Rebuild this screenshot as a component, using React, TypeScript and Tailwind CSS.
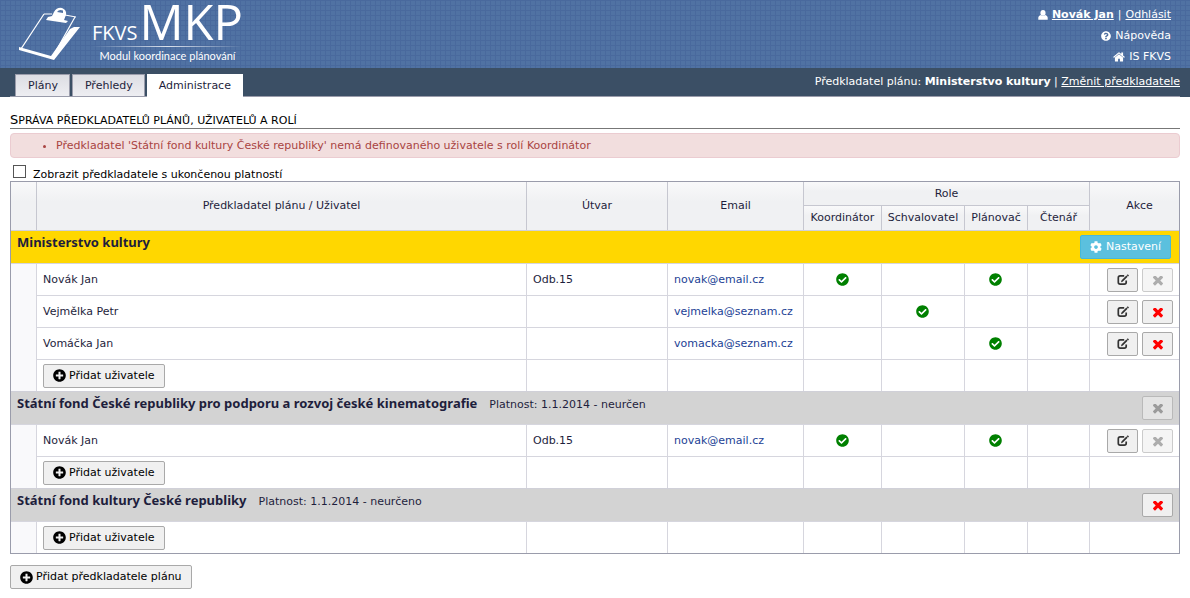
import type { ReactNode } from 'react'
import { FaCheckCircle, FaCog, FaPlusCircle, FaQuestionCircle } from 'react-icons/fa'

interface User {
  name: string
  unit: string
  email: string
  /** Koordinátor, Schvalovatel, Plánovač, Čtenář */
  roles: boolean[]
  locked?: boolean
}

interface Group {
  name: string
  validity?: string
  own?: boolean
  locked?: boolean
  users: User[]
}

const ROLES = ['Koordinátor', 'Schvalovatel', 'Plánovač', 'Čtenář']

const GROUPS: Group[] = [
  {
    name: 'Ministerstvo kultury',
    own: true,
    users: [
      { name: 'Novák Jan', unit: 'Odb.15', email: 'novak@email.cz', roles: [true, false, true, false], locked: true },
      { name: 'Vejmělka Petr', unit: '', email: 'vejmelka@seznam.cz', roles: [false, true, false, false] },
      { name: 'Vomáčka Jan', unit: '', email: 'vomacka@seznam.cz', roles: [false, false, true, false] },
    ],
  },
  {
    name: 'Státní fond České republiky pro podporu a rozvoj české kinematografie',
    validity: 'Platnost: 1.1.2014 - neurčen',
    locked: true,
    users: [
      { name: 'Novák Jan', unit: 'Odb.15', email: 'novak@email.cz', roles: [true, false, true, false], locked: true },
    ],
  },
  {
    name: 'Státní fond kultury České republiky',
    validity: 'Platnost: 1.1.2014 - neurčeno',
    users: [],
  },
]

const TH = 'p-0 font-normal border-[#c6c7d0] bg-linear-to-b from-[#f9f9fa] to-[#f0f1f3] to-40%'
const TD = 'border-t border-l border-[#d6d6de] px-1.5 py-0'

function UserIcon() {
  return (
    <svg viewBox="0 0 10 10" className="size-2.5" fill="currentColor" aria-hidden="true">
      <ellipse cx="5" cy="2.9" rx="2.6" ry="2.9" />
      <path d="M0.3 9.8 V7.4 Q0.5 5.6 2.6 5 Q5 7 7.4 5 Q9.5 5.6 9.7 7.4 V9.8 Z" />
    </svg>
  )
}

function HomeIcon() {
  return (
    <svg viewBox="50 200 1692 1400" className="h-2.5 w-3" fill="currentColor" aria-hidden="true">
      <path d="M1472 992v480q0 26-19 45t-45 19h-384v-384h-256v384h-384q-26 0-45-19t-19-45v-480q0-1 .5-3t.5-3l575-474 575 474q1 2 1 6zm223-69l-62 74q-8 9-21 11h-3q-13 0-21-7l-692-577-692 577q-12 8-24 7-13-2-21-11l-62-74q-8-10-7-23.5t11-21.5l719-599q32-26 76-26t76 26l244 204v-195q0-14 9-23t23-9h192q14 0 23 9t9 23v408l219 182q10 8 11 21.5t-7 23.5z" />
    </svg>
  )
}

function EditIcon() {
  return (
    <svg viewBox="0 0 12 12" className="size-3" fill="none" stroke="#333" aria-hidden="true">
      <path d="M7.2 1.8 H3.2 Q1.3 1.8 1.3 3.7 V8.3 Q1.3 10.2 3.2 10.2 H7.3 Q9.2 10.2 9.2 8.3 V6.6" strokeWidth="1.7" />
      <path d="M5 7.2 L10 2.2" strokeWidth="1.8" />
      <path d="M10.4 1.8 L11.4 0.8" strokeWidth="1.8" />
      <path d="M4 8.2 L4.5 6.4 L5.8 7.7 Z" fill="#333" stroke="none" />
    </svg>
  )
}

function CrossIcon() {
  return (
    <svg viewBox="302 434 1188 1188" className="mt-0.5 size-2.5" fill="currentColor" aria-hidden="true">
      <path d="M1490 1322q0 40-28 68l-136 136q-28 28-68 28t-68-28l-294-294-294 294q-28 28-68 28t-68-28l-136-136q-28-28-28-68t28-68l294-294-294-294q-28-28-28-68t28-68l136-136q28-28 68-28t68 28l294 294 294-294q28-28 68-28t68 28l136 136q28 28 28 68t-28 68l-294 294 294 294q28 28 28 68z" />
    </svg>
  )
}

function Logo() {
  return (
    <div className="flex pl-[18px]">
      <svg viewBox="0 0 70 60" className="mt-1 h-15 w-[70px]" aria-hidden="true">
        <path d="M26 10 L3 45 L34 54 L57 13" fill="none" stroke="#fff" strokeWidth="1.2" />
        <path d="M26 10 L34 10 M47 11 L58 13" stroke="#fff" strokeWidth="1.2" />
        <path d="M1 43 L33 52 L52 25 L56 23 L62 23 L36 56 L1 46 Z" fill="#fff" />
        <path d="M34 12 L36 8 Q39 3 44 4 Q49 6 48 11 L46 16 L50 17 L48 19 L28 16 L30 13 Z" fill="#fff" />
        <path d="M39 8 Q41 5 45 6.5 L45 9 Z" fill="#5072a3" />
      </svg>
      <div className="flex flex-col items-center pl-1 font-['Open_Sans','Noto_Sans',sans-serif] text-white">
        <div className="flex h-[46px] items-baseline gap-0.5">
          <span className="text-[20px] leading-[42px]">FKVS</span>
          <span className="text-[49px] leading-[42px]">MKP</span>
        </div>
        <div className="h-px w-full bg-linear-to-r from-transparent via-white/80 to-transparent" />
        <div className="font-[Lato,sans-serif] text-[11px] leading-[18px]">Modul koordinace plánování</div>
      </div>
    </div>
  )
}

function Header() {
  return (
    <header className="flex h-17 justify-between bg-[#5072a3] bg-[linear-gradient(#49699d_1px,transparent_1px),linear-gradient(90deg,#49699d_1px,transparent_1px)] bg-size-[5px_5px]">
      <Logo />
      <div className="flex flex-col items-end gap-1 pt-1.5 pr-[19px] leading-[17px] text-white">
        <div className="flex items-center gap-1">
          <UserIcon />
          <a href="#profil" className="font-bold underline">Novák Jan</a>
          <span>|</span>
          <a href="#odhlasit" className="underline">Odhlásit</a>
        </div>
        <a href="#napoveda" className="flex items-center gap-1">
          <FaQuestionCircle className="size-2.5" />
          Nápověda
        </a>
        <a href="#fkvs" className="flex items-center gap-1">
          <HomeIcon />
          IS FKVS
        </a>
      </div>
    </header>
  )
}

function Tab({ active, children }: { active?: boolean; children: ReactNode }) {
  return (
    <a
      href="#tab"
      aria-current={active ? 'page' : undefined}
      className={
        active
          ? '-mb-px h-[23px] bg-white px-3 leading-6'
          : 'h-[22px] border border-b-0 border-[#9a9cab] bg-linear-to-b from-[#dcdde3] to-[#eeeef2] pr-[11px] pl-3 leading-[22px]'
      }
    >
      {children}
    </a>
  )
}

function TabBar() {
  return (
    <nav className="bg-[#3b4f65] px-2.5">
      <div className="flex h-[29px] items-end justify-between border-b border-[#9a9cab] pl-[5px]">
        <div className="flex items-end gap-0.5">
          <Tab>Plány</Tab>
          <Tab>Přehledy</Tab>
          <Tab active>Administrace</Tab>
        </div>
        <p className="self-start leading-7 text-white">
          Předkladatel plánu: <b>Ministerstvo kultury</b> | <a href="#zmenit" className="underline">Změnit předkladatele</a>
        </p>
      </div>
    </nav>
  )
}

function AddButton({ children }: { children: ReactNode }) {
  return (
    <button className="flex h-6 items-center gap-[3px] rounded-xs border border-[#a9a9a9] bg-[#f0f0f0] px-[9px] text-black">
      <FaPlusCircle className="size-[13px]" />
      {children}
    </button>
  )
}

function EditButton() {
  return (
    <button aria-label="Upravit" className="flex h-6 w-[31px] items-center justify-center rounded-xs border border-[#a9a9a9] bg-[#f0f0f0]">
      <EditIcon />
    </button>
  )
}

function DeleteButton({ disabled }: { disabled?: boolean }) {
  return (
    <button
      aria-label="Odstranit"
      disabled={disabled}
      className="flex h-6 w-[31px] items-center justify-center rounded-xs border border-[#a9a9a9] bg-[#f0f0f0] text-[#f00] disabled:text-[#777] disabled:opacity-60"
    >
      <CrossIcon />
    </button>
  )
}

function UserRow({ user, first }: { user: User; first: boolean }) {
  return (
    <tr className="h-8">
      <td className={first ? 'border-t border-[#d6d6de] bg-[#f9f9fb] p-0' : 'bg-[#f9f9fb] p-0'} />
      <td className={TD}>{user.name}</td>
      <td className={TD}>{user.unit}</td>
      <td className={TD}>
        <a href={`mailto:${user.email}`} className="text-[#1c3f95]">{user.email}</a>
      </td>
      {user.roles.map((has, i) => (
        <td key={ROLES[i]} className={TD}>
          {has && <FaCheckCircle className="mx-auto size-[13px] text-[#008000]" aria-label="Ano" />}
        </td>
      ))}
      <td className={TD}>
        <div className="flex justify-end gap-1">
          <EditButton />
          <DeleteButton disabled={user.locked} />
        </div>
      </td>
    </tr>
  )
}

function GroupRows({ group }: { group: Group }) {
  return (
    <tbody>
      <tr className={group.own ? 'h-[33px] bg-[#ffd700]' : 'h-[33px] bg-[#d3d3d3]'}>
        <td colSpan={9} className="border-t border-[#d0d0d8] px-1.5 py-0">
          <div className="flex items-center justify-between">
            <div className="flex items-baseline gap-3 self-start leading-4">
              <b className="font-['Noto_Sans',sans-serif] text-[13px] leading-[15px]">{group.name}</b>
              {group.validity && <span>{group.validity}</span>}
            </div>
            {group.own ? (
              <button className="mr-0.5 flex h-6 items-center gap-1 rounded-xs border border-[#46b8da] bg-[#5bc0de] px-[9px] text-white">
                <FaCog className="size-3" />
                Nastavení
              </button>
            ) : (
              <DeleteButton disabled={group.locked} />
            )}
          </div>
        </td>
      </tr>
      {group.users.map((user, i) => (
        <UserRow key={user.name} user={user} first={i === 0} />
      ))}
      <tr className="h-8">
        <td className={group.users.length === 0 ? 'border-t border-[#d6d6de] bg-[#f9f9fb] p-0' : 'bg-[#f9f9fb] p-0'} />
        <td className={TD}>
          <AddButton>Přidat uživatele</AddButton>
        </td>
        {[0, 1, 2, 3, 4, 5, 6].map((i) => (
          <td key={i} className={TD} />
        ))}
      </tr>
    </tbody>
  )
}

function UserTable() {
  return (
    <table className="w-full table-fixed border-separate border-spacing-0 border border-[#9a9cab] text-[#1e1e3c]">
      <colgroup>
        <col className="w-[25px]" />
        <col />
        <col className="w-[141px]" />
        <col className="w-[136px]" />
        <col className="w-[78px]" />
        <col className="w-[83px]" />
        <col className="w-[63px]" />
        <col className="w-[62px]" />
        <col className="w-[90px]" />
      </colgroup>
      <thead>
        <tr className="h-[23px]">
          <th rowSpan={2} className={TH} />
          <th rowSpan={2} className={`${TH} border-l`}>Předkladatel plánu / Uživatel</th>
          <th rowSpan={2} className={`${TH} border-l`}>Útvar</th>
          <th rowSpan={2} className={`${TH} border-l`}>Email</th>
          <th colSpan={4} className={`${TH} border-l`}>Role</th>
          <th rowSpan={2} className={`${TH} border-l`}>
            <span className="pl-2.5">Akce</span>
          </th>
        </tr>
        <tr className="h-[25px]">
          {ROLES.map((role) => (
            <th key={role} className={`${TH} border-t border-l`}>{role}</th>
          ))}
        </tr>
      </thead>
      {GROUPS.map((group) => (
        <GroupRows key={group.name} group={group} />
      ))}
    </table>
  )
}

export default function App() {
  return (
    <div className="min-h-screen bg-white font-[Verdana,'DejaVu_Sans',sans-serif] text-[11px] leading-4 text-[#1e1e3c]">
      <Header />
      <TabBar />
      <main className="px-2.5 pt-[15px]">
        <h1 className="border-b border-[#777] leading-[15px] text-black uppercase first-letter:text-[13px]">
          Správa předkladatelů plánů, uživatelů a rolí
        </h1>
        <div className="mt-1 rounded border border-[#ebccd1] bg-[#f2dede] pt-1 pb-[3px] text-[#a94442]">
          <ul className="list-disc pl-[45px]">
            <li>Předkladatel 'Státní fond kultury České republiky' nemá definovaného uživatele s rolí Koordinátor</li>
          </ul>
        </div>
        <label className="flex h-[23px] items-end gap-[7px] pl-[3px] leading-[13px] text-black">
          <input type="checkbox" className="mb-[3px] size-[13px] appearance-none border border-[#555] bg-white checked:bg-[#555]" />
          Zobrazit předkladatele s ukončenou platností
        </label>
        <UserTable />
        <div className="py-[11px]">
          <AddButton>Přidat předkladatele plánu</AddButton>
        </div>
      </main>
    </div>
  )
}
